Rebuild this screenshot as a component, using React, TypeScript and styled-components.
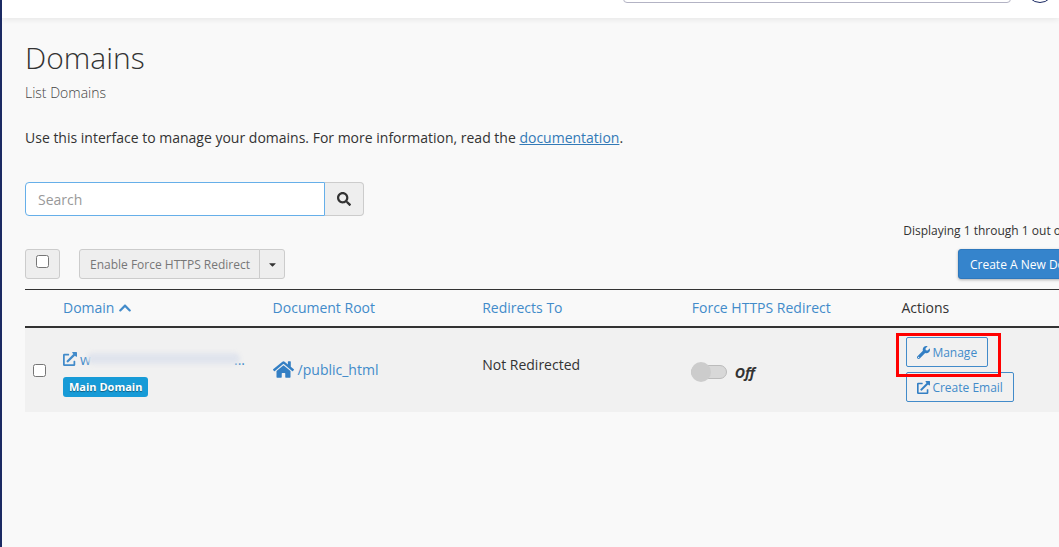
import React from "react";
import styled, { createGlobalStyle } from "styled-components";
import { FaSearch, FaChevronUp, FaHome, FaWrench, FaExternalLinkAlt, FaCaretDown } from "react-icons/fa";

const Global = createGlobalStyle`
  html, body { margin: 0; padding: 0; height: 100%; overflow: hidden; background: #f9f9f9; }
  body { font-family: "Open Sans", "Liberation Sans", sans-serif; color: #333; font-size: 14px; }
  #root { height: 100%; }
`;

const Page = styled.div`
  position: relative;
  width: 1059px;
  height: 547px;
  overflow: hidden;
  box-sizing: border-box;
  border-left: 2px solid #1b2a63;
`;

const TopBar = styled.header`
  height: 18px;
  background: #fff;
  box-shadow: 0 1px 6px rgba(0, 0, 0, 0.09);
  display: flex;
  align-items: flex-end;
  justify-content: flex-end;
  gap: 15px;
  padding: 0 5px 15px 0;
  box-sizing: border-box;
`;

const TopSearch = styled.div`
  flex: none;
  width: 388px;
  height: 30px;
  box-sizing: border-box;
  border: 1px solid #b3b3c4;
  border-radius: 4px;
  background: #fff;
`;

const TopAvatar = styled.div`
  flex: none;
  width: 28px;
  height: 28px;
  box-sizing: border-box;
  border: 1px solid #1b2a63;
  border-radius: 50%;
`;

const Content = styled.main`
  width: 1084px;
  padding: 19px 0 0 23px;
  box-sizing: content-box;
`;

const Title = styled.h1`
  margin: 0;
  font-size: 30px;
  line-height: 42px;
  font-weight: 300;
  color: #333;
`;

const Subtitle = styled.div`
  font-size: 14px;
  font-weight: 300;
  line-height: 20px;
  margin-top: 4px;
  color: #444;
`;

const Intro = styled.p`
  margin: 25px 0 0;
  font-size: 14px;
  line-height: 20px;
  a { color: #337ab7; text-decoration: underline; }
`;

const SearchRow = styled.div`
  display: flex;
  margin-top: 34px;
  height: 34px;
`;

const SearchInput = styled.div`
  width: 300px;
  box-sizing: border-box;
  border: 1px solid #66afe9;
  border-radius: 4px 0 0 4px;
  background: #fff;
  color: #999;
  padding: 0 12px;
  font-size: 14px;
  line-height: 34px;
`;

const SearchButton = styled.div`
  width: 39px;
  box-sizing: border-box;
  border: 1px solid #ccc;
  border-left: 0;
  border-radius: 0 4px 4px 0;
  background: #eee;
  color: #333;
  display: flex;
  align-items: center;
  justify-content: center;
  font-size: 14px;
`;

const Displaying = styled.div`
  margin-top: 6px;
  text-align: right;
  font-size: 12px;
  line-height: 18px;
  white-space: nowrap;
`;

const ToolRow = styled.div`
  display: flex;
  align-items: center;
  margin-top: 9px;
  height: 30px;
`;

const SelectAll = styled.div`
  width: 35px;
  height: 30px;
  box-sizing: border-box;
  border: 1px solid #ccc;
  border-radius: 3px;
  background: #eee;
  display: flex;
  justify-content: center;
  padding-top: 5px;
  margin-right: 19px;
`;

const Check = styled.span`
  display: block;
  width: 13px;
  height: 13px;
  box-sizing: border-box;
  border: 1px solid #767676;
  border-radius: 2.5px;
  background: #fff;
`;

const SplitMain = styled.div`
  height: 30px;
  box-sizing: border-box;
  border: 1px solid #ccc;
  border-radius: 3px 0 0 3px;
  background: #eee;
  color: #777;
  font-size: 12px;
  line-height: 30px;
  padding: 0 9px 0 10px;
  white-space: nowrap;
`;

const SplitCaret = styled.div`
  width: 26px;
  height: 30px;
  box-sizing: border-box;
  border: 1px solid #ccc;
  border-radius: 0 3px 3px 0;
  background: #eee;
  color: #333;
  font-size: 11px;
  display: flex;
  align-items: center;
  justify-content: center;
  margin-left: -1px;
`;

const CreateButton = styled.div`
  margin-left: auto;
  margin-right: 4px;
  height: 30px;
  box-sizing: border-box;
  background: #3584cc;
  border: 1px solid #2e78bd;
  border-radius: 3px;
  color: #fff;
  font-size: 12px;
  line-height: 29px;
  padding: 0 11px;
  white-space: nowrap;
  box-shadow: 0 1px 3px rgba(0, 0, 0, 0.3);
`;

const TableHead = styled.div`
  display: grid;
  grid-template-columns: 28px repeat(4, 209.6px) 1fr;
  margin-top: 10px;
  height: 39px;
  box-sizing: border-box;
  border-top: 1px solid #333;
  border-bottom: 2px solid #333;
  align-items: center;
`;

const HeadCell = styled.div<{ $plain?: boolean }>`
  padding-left: 10px;
  font-size: 14px;
  line-height: 20px;
  color: ${(p) => (p.$plain ? "#333" : "#428bca")};
  display: flex;
  align-items: center;
  gap: 4px;
  svg { font-size: 14px; }
`;

const TableRow = styled.div`
  display: grid;
  grid-template-columns: 28px repeat(4, 209.6px) 1fr;
  height: 84px;
  background: #f1f1f1;
  align-items: center;
`;

const CheckCell = styled.div`
  padding-left: 8px;
`;

const DomainCell = styled.div`
  padding: 7px 0 0 10px;
  display: flex;
  flex-direction: column;
  gap: 9px;
`;

const DomainLink = styled.div`
  position: relative;
  display: flex;
  align-items: center;
  gap: 3px;
  height: 18px;
  width: 182px;
  color: #428bca;
  font-size: 14px;
  svg { font-size: 14px; flex: none; }
`;

const DomainText = styled.span`
  flex: 1;
  display: flex;
  justify-content: space-between;
`;

const Blur = styled.span`
  position: absolute;
  left: 24px;
  top: 3px;
  width: 153px;
  height: 11px;
  background: #e0e4ed;
  border-radius: 6px;
  filter: blur(2px);
`;

const Badge = styled.span`
  align-self: flex-start;
  background: #179bd7;
  border-radius: 3px;
  color: #fff;
  font-size: 11px;
  font-weight: 700;
  line-height: 20px;
  height: 20px;
  padding: 0 6px;
  text-shadow: 0 1px 1px rgba(0, 0, 0, 0.4);
`;

const RootCell = styled.div`
  padding: 0 0 2px 10px;
  display: flex;
  align-items: center;
  gap: 4px;
  color: #428bca;
  font-size: 14px;
  svg { font-size: 21px; color: #337fc4; }
`;

const PlainCell = styled.div`
  padding: 0 0 11px 10px;
  font-size: 14px;
  color: #333;
`;

const ToggleCell = styled.div`
  padding: 4px 0 0 9px;
  display: flex;
  align-items: center;
  gap: 8px;
`;

const Toggle = styled.div`
  position: relative;
  width: 36px;
  height: 14px;
  box-sizing: border-box;
  border: 1px solid #bbb;
  background: #d8d8d8;
  border-radius: 7px;
`;

const Knob = styled.span`
  position: absolute;
  left: -1px;
  top: -4px;
  width: 20px;
  height: 20px;
  border-radius: 50%;
  background: #ccc;
`;

const OffLabel = styled.span`
  font-size: 14px;
  font-weight: 700;
  font-style: italic;
  color: #333;
`;

const ActionCell = styled.div`
  padding-left: 15px;
  display: flex;
  flex-direction: column;
  align-items: flex-start;
  gap: 5px;
  margin-top: -1px;
`;

const ActionButton = styled.div`
  height: 30px;
  box-sizing: border-box;
  border: 1px solid #428bca;
  border-radius: 2px;
  color: #428bca;
  font-size: 12px;
  padding: 0 10px;
  display: flex;
  align-items: center;
  gap: 2px;
  white-space: nowrap;
  svg { font-size: 13px; color: #337fc4; }
`;

const Highlight = styled.div`
  position: absolute;
  left: 894px;
  top: 333px;
  width: 105px;
  height: 44px;
  box-sizing: border-box;
  border: 3px solid #f00;
`;

export default function App() {
  return (
    <>
      <Global />
      <Page>
        <TopBar>
          <TopSearch />
          <TopAvatar />
        </TopBar>
        <Content>
          <Title>Domains</Title>
          <Subtitle>List Domains</Subtitle>
          <Intro>
            Use this interface to manage your domains. For more information, read the <a href="#doc">documentation</a>.
          </Intro>
          <SearchRow>
            <SearchInput>Search</SearchInput>
            <SearchButton><FaSearch /></SearchButton>
          </SearchRow>
          <Displaying>Displaying 1 through 1 out of 1 items</Displaying>
          <ToolRow>
            <SelectAll><Check /></SelectAll>
            <SplitMain>Enable Force HTTPS Redirect</SplitMain>
            <SplitCaret><FaCaretDown /></SplitCaret>
            <CreateButton>Create A New Domain</CreateButton>
          </ToolRow>
          <TableHead>
            <div />
            <HeadCell>Domain <FaChevronUp /></HeadCell>
            <HeadCell>Document Root</HeadCell>
            <HeadCell>Redirects To</HeadCell>
            <HeadCell>Force HTTPS Redirect</HeadCell>
            <HeadCell $plain>Actions</HeadCell>
          </TableHead>
          <TableRow>
            <CheckCell><Check /></CheckCell>
            <DomainCell>
              <DomainLink>
                <FaExternalLinkAlt />
                <DomainText><span>w</span><span>...</span></DomainText>
                <Blur />
              </DomainLink>
              <Badge>Main Domain</Badge>
            </DomainCell>
            <RootCell><FaHome /> /public_html</RootCell>
            <PlainCell>Not Redirected</PlainCell>
            <ToggleCell>
              <Toggle><Knob /></Toggle>
              <OffLabel>Off</OffLabel>
            </ToggleCell>
            <ActionCell>
              <ActionButton><FaWrench /> Manage</ActionButton>
              <ActionButton><FaExternalLinkAlt /> Create Email</ActionButton>
            </ActionCell>
          </TableRow>
        </Content>
        <Highlight />
      </Page>
    </>
  );
}
